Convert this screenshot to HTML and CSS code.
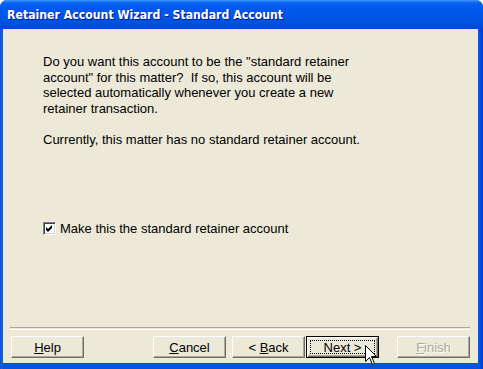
FILE: index.html
```html
<!DOCTYPE html>
<html lang="en">

<head>
    <meta charset="UTF-8">
    <title>Retainer Account Wizard - Standard Account</title>
    <link rel="stylesheet" href="styles.css">
</head>

<body>
    <div class="window">
        <div class="titlebar">
            <span class="title">Retainer Account Wizard - Standard Account</span>
        </div>
        <div class="client">
            <div class="content">
                <p>Do you want this account to be the "standard retainer<br>
                    account" for this matter?&nbsp; If so, this account will be<br>
                    selected automatically whenever you create a new<br>
                    retainer transaction.</p>
                <p>Currently, this matter has no standard retainer account.</p>
                <label class="check-row">
                    <span class="checkbox">
                        <svg width="9" height="9" viewBox="0 0 9 9">
                            <path d="M1 3 L3 5 L7 1 L7 4 L3 8 L1 6 Z" />
                        </svg>
                    </span>
                    Make this the standard retainer account
                </label>
            </div>
            <div class="separator"></div>
            <div class="buttons">
                <button class="btn"><u>H</u>elp</button>
                <div class="spacer"></div>
                <button class="btn"><u>C</u>ancel</button>
                <button class="btn btn-back">&lt; <u>B</u>ack</button>
                <button class="btn btn-default"><span class="focus">Next &gt;</span></button>
                <button class="btn btn-disabled"><u>F</u>inish</button>
            </div>
        </div>
        <!-- mouse pointer over the Next button -->
        <svg class="cursor" width="13" height="21" viewBox="0 0 13 21">
            <path d="M0.5 0.5 L0.5 16.5 L4.5 12.5 L7.5 19.5 L9.5 18.5 L6.5 11.5 L11.5 11.5 Z" fill="#fff"
                stroke="#000" stroke-width="1" />
        </svg>
    </div>
</body>

</html>
```

FILE: styles.css
```css
body {
    margin: 0;
    background-color: #ffffff;
}

.window {
    position: relative;
    width: 483px;
    height: 369px;
    display: flex;
    flex-direction: column;
    background: linear-gradient(to right, #0831d9, #166aee 1px, #0055e5 3px, #0055e5 calc(100% - 3px), #0033cc);
    border-radius: 7px 7px 0 0;
    overflow: hidden;
}

.titlebar {
    height: 29px;
    flex-shrink: 0;
    display: flex;
    align-items: center;
    padding-left: 7px;
    background: linear-gradient(to bottom, #3d95ff 0, #0a61f2 3px, #0058ee 8px, #0055e5 18px, #004fdc 25px, #0045d3 29px);
}

.title {
    color: #fff;
    font-family: "DejaVu Sans", sans-serif;
    font-stretch: condensed;
    font-weight: bold;
    font-size: 12.2px;
    text-shadow: 1px 1px #0a1883;
    margin-top: 1px;
}

.client {
    flex: 1;
    display: flex;
    flex-direction: column;
    margin: 0 5px 6px 3px;
    background-color: #ece9d8;
    font-family: "Liberation Sans", Arial, sans-serif;
    font-size: 13px;
    color: #000;
}

.content {
    flex: 1;
    padding: 25px 0 0 40px;
}

.content p {
    margin: 0 0 15.5px 0;
    line-height: 15.5px;
}

.check-row {
    display: flex;
    align-items: center;
    gap: 4px;
    margin-top: 74px;
    line-height: 15px;
}

.checkbox {
    width: 11px;
    height: 11px;
    background-color: #fff;
    display: flex;
    align-items: center;
    justify-content: center;
    border: 1px solid;
    border-color: #848284 #fff #fff #848284;
    box-shadow: inset 1px 1px #404040, inset -1px -1px #d4d0c8;
}

.checkbox svg path {
    fill: #000;
}

.separator {
    height: 1px;
    margin: 0 8px 0 7px;
    border-top: 1px solid #aca899;
    border-bottom: 1px solid #fff;
}

.buttons {
    display: flex;
    align-items: center;
    padding: 6px 8px 5px 8px;
}

.spacer {
    flex: 1;
}

.btn {
    width: 73px;
    height: 22px;
    padding: 0;
    font-family: "Liberation Sans", Arial, sans-serif;
    font-size: 13px;
    color: #000;
    background-color: #ece9d8;
    border: 1px solid;
    border-color: #fff #716f64 #716f64 #fff;
    box-shadow: inset -1px -1px #aca899;
}

.btn-back {
    margin-left: 6px;
}

.btn-default {
    margin-left: 1px;
    border: 1px solid #000;
    box-shadow: inset 1px 1px #fff, inset -1px -1px #716f64, inset -2px -2px #aca899;
    display: flex;
    padding: 3px;
}

.focus {
    flex: 1;
    border: 1px dotted #000;
    display: flex;
    align-items: center;
    justify-content: center;
}

.btn-disabled {
    margin-left: 18px;
    color: #aca899;
    text-shadow: 1px 1px #fff;
}

.cursor {
    position: absolute;
    left: 365px;
    top: 345px;
}
```
